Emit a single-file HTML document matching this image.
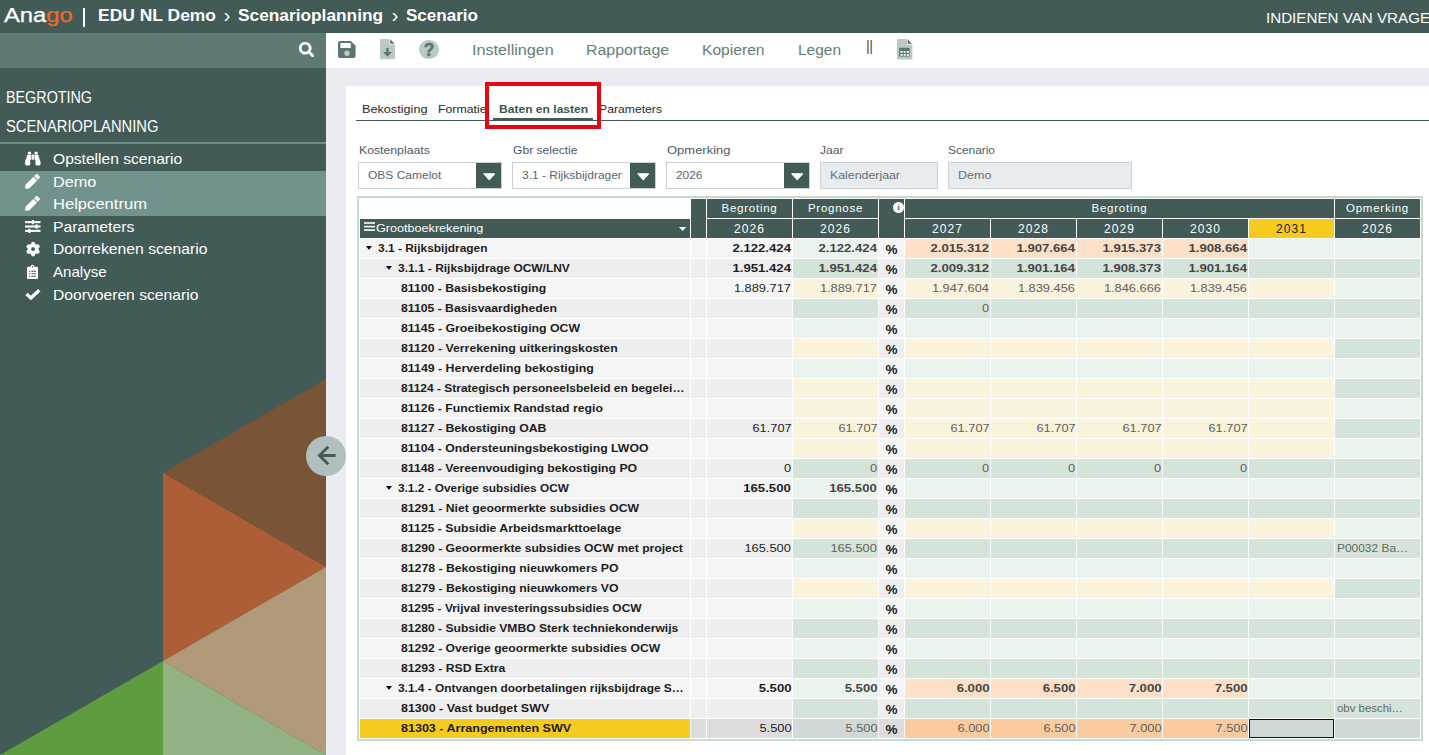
<!DOCTYPE html>
<html lang="nl"><head><meta charset="utf-8"><title>Anago - Scenario</title>
<style>
*{box-sizing:border-box;margin:0;padding:0}
html,body{width:1429px;height:755px;overflow:hidden;background:#ebecf1;font-family:"Liberation Sans",sans-serif;}
.abs{position:absolute}
#top{position:absolute;left:0;top:0;width:1429px;height:33px;background:#425b57;color:#fff;overflow:hidden}
#top span{position:absolute;white-space:nowrap;transform-origin:0 50%}
.bc{font-weight:700;font-size:17px;top:6px}
#side{position:absolute;left:0;top:33px;width:326px;height:722px;background:#425b57;overflow:hidden}
#srch{position:absolute;left:0;top:0;width:326px;height:35px;background:#5f7a74}
.sh{position:absolute;left:6px;color:#fff;font-size:16px;white-space:nowrap;transform-origin:0 50%}
.si{position:absolute;left:53px;color:#fff;font-size:15px;white-space:nowrap;transform-origin:0 50%}
.ic{position:absolute;overflow:visible}
#tool{position:absolute;left:326px;top:33px;width:1103px;height:35px;background:#fff}
.tb{position:absolute;top:41px;font-size:15px;color:#667d79;white-space:nowrap;transform-origin:0 50%}
#panel{position:absolute;left:346px;top:86px;width:1083px;height:669px;background:#fff}
.tab{position:absolute;top:102.500px;font-size:11.500px;color:#2a2a2a;white-space:nowrap;transform-origin:0 50%}
.fl{position:absolute;top:144px;font-size:11px;color:#4f5a66;white-space:nowrap;transform-origin:0 50%}
.dd{position:absolute;top:162px;height:27px;width:144px;border:1px solid #c9d0d7;background:#fff;font-size:11px;color:#5a6570;padding:5.500px 0 0 9px;white-space:nowrap;overflow:hidden}
.dd i{position:absolute;right:0;top:0;width:25px;height:25px;background:#425b57}
.dd i svg{position:absolute;left:6.5px;top:10px}
.dis{background:#e9ecef;color:#666f78}
.c{position:absolute;font-size:11px;white-space:nowrap;overflow:hidden;line-height:19.600px;color:#1d1d1d}
.lt{display:inline-block;transform-origin:0 50%}
.h{position:absolute;background:#425b57;color:#fff;font-size:11.500px;text-align:center;white-space:nowrap;letter-spacing:.75px;overflow:hidden}
.hy{font-size:12px;letter-spacing:1.100px;padding-top:3px}
.lab{font-weight:700}
.num{text-align:right;padding-right:.8px}
.num span{display:inline-block;transform-origin:100% 50%;transform:scaleX(1.165)}
.b{font-weight:700}
.b span{transform:scaleX(1.195)}
.g{color:#606060}
.b.g{color:#454545}
.pct{font-weight:700;text-align:center;font-size:13.500px;padding-right:0;line-height:21px}
.opm{color:#666;padding-left:1.500px;font-size:11px}
.ar{position:absolute;top:7px;border:3.4px solid transparent;border-top:4px solid #111;border-bottom:0}
</style></head><body>
<!-- top bar -->
<div id="top">
 <span style="left:4px;top:3.500px;font-size:20px;transform:scaleX(1.19);transform-origin:0 0;-webkit-text-stroke:.25px #fff">Ana<span style="position:static;color:#f26a21;-webkit-text-stroke:.25px #f26a21">go</span></span>
 <span style="left:82.500px;top:7.500px;width:2.500px;height:19.500px;background:#fff"></span>
 <span class="bc" style="left:98px;transform:scaleX(1.027)">EDU NL Demo</span>
 <span style="left:223.500px;top:1px;font-size:21px;line-height:28px">›</span>
 <span class="bc" style="left:238px;transform:scaleX(1.017)">Scenarioplanning</span>
 <span style="left:391.500px;top:1px;font-size:21px;line-height:28px">›</span>
 <span class="bc" style="left:406px;transform:scaleX(1.003)">Scenario</span>
 <span style="left:1266px;top:9px;font-size:15px;transform:scaleX(1.011)">INDIENEN VAN VRAGEN</span>
</div>
<!-- sidebar -->
<div id="side">
 <div id="srch"><svg class="abs" style="left:298.800px;top:8.700px" width="15.200" height="15.200" viewBox="0 0 512 512"><path fill="#fff" stroke="#fff" stroke-width="14" d="M505 442.700L405.300 343c-4.500-4.500-10.600-7-17-7H372c27.600-35.300 44-79.700 44-128C416 93.100 322.900 0 208 0S0 93.100 0 208s93.100 208 208 208c48.300 0 92.700-16.400 128-44v16.300c0 6.400 2.500 12.500 7 17l99.700 99.700c9.400 9.400 24.600 9.400 33.900 0l28.300-28.300c9.400-9.400 9.400-24.600.1-34zM208 336c-70.700 0-128-57.200-128-128 0-70.700 57.200-128 128-128 70.700 0 128 57.200 128 128 0 70.700-57.200 128-128 128z"/></svg></div>
 <svg class="abs" style="left:0;top:0" width="326" height="722" viewBox="0 33 326 722">
  <polygon points="163,473 326,379 326,567" fill="#795436"/>
  <polygon points="163,473 326,567 163,661" fill="#ad5e36"/>
  <polygon points="163,661 326,567 326,755" fill="#b19a79"/>
  <polygon points="163,661 326,755 163,755" fill="#93b283"/>
  <polygon points="163,661 163,755 0,755" fill="#5f9c3f"/>
 </svg>
 <div class="sh" style="top:56px;transform:scaleX(0.896)">BEGROTING</div>
 <div class="sh" style="top:85px;transform:scaleX(0.922)">SCENARIOPLANNING</div>
 <div class="abs" style="left:0;top:109px;width:326px;height:2px;background:#6f8e89"></div>
 <div class="abs" style="left:0;top:138px;width:326px;height:45px;background:#72928d"></div>
 <div class="si" style="top:117px;transform:scaleX(1.040)">Opstellen scenario</div>
 <div class="si" style="top:140px;transform:scaleX(1.085)">Demo</div>
 <div class="si" style="top:162px;transform:scaleX(1.105)">Helpcentrum</div>
 <div class="si" style="top:185px;transform:scaleX(1.049)">Parameters</div>
 <div class="si" style="top:207px;transform:scaleX(1.047)">Doorrekenen scenario</div>
 <div class="si" style="top:230px;transform:scaleX(1.006)">Analyse</div>
 <div class="si" style="top:253px;transform:scaleX(1.044)">Doorvoeren scenario</div>
 <!-- binoculars -->
 <svg class="ic" style="left:25px;top:119px" width="15.6" height="13.2" viewBox="0 32 512 448"><path fill="#fff" stroke="#fff" stroke-width="14" d="M416 48c0-8.840-7.160-16-16-16h-64c-8.840 0-16 7.160-16 16v48h96V48zM63.910 159.990C61.400 253.840 3.460 274.220 0 404v44c0 17.670 14.330 32 32 32h96c17.670 0 32-14.330 32-32V288h32V128H95.840c-17.630 0-31.450 14.370-31.930 31.990zm384.180 0c-.48-17.620-14.300-31.990-31.930-31.990H320v160h32v160c0 17.670 14.330 32 32 32h96c17.670 0 32-14.330 32-32v-44c-3.460-129.780-61.400-150.160-63.910-244.010zM176 32h-64c-8.840 0-16 7.160-16 16v48h96V48c0-8.840-7.160-16-16-16zm48 256h64V128h-64v160z"/></svg>
 <!-- pens -->
 <svg class="ic" style="left:25px;top:141px" width="15" height="14.800" viewBox="0 0 512 512"><path fill="#fff" d="M290.740 93.240l128.020 128.020-277.990 277.990-114.140 12.600C11.350 513.540-1.560 500.620.140 485.340l12.700-114.220 277.900-277.880zm207.200-19.060l-60.110-60.110c-18.750-18.750-49.160-18.750-67.910 0l-56.550 56.550 128.020 128.020 56.550-56.550c18.750-18.760 18.750-49.160 0-67.910z"/></svg>
 <svg class="ic" style="left:25px;top:163px" width="15" height="14.800" viewBox="0 0 512 512"><path fill="#fff" d="M290.740 93.240l128.020 128.020-277.990 277.990-114.140 12.600C11.350 513.540-1.560 500.620.140 485.340l12.700-114.220 277.900-277.880zm207.200-19.060l-60.110-60.110c-18.750-18.750-49.160-18.750-67.910 0l-56.550 56.550 128.020 128.020 56.550-56.550c18.750-18.760 18.750-49.160 0-67.910z"/></svg>
 <!-- sliders -->
 <svg class="ic" style="left:25px;top:187px" width="15.500" height="13" viewBox="0 0 15.500 13"><g fill="#fff"><rect x="0" y="1.100" width="15.500" height="2.100"/><rect x="0" y="5.450" width="15.500" height="2.100"/><rect x="0" y="9.800" width="15.500" height="2.100"/><rect x="7" y="0" width="2" height="4.300" rx=".5"/><rect x="10.600" y="4.350" width="2" height="4.300" rx=".5"/><rect x="3.400" y="8.700" width="2" height="4.300" rx=".5"/></g></svg>
 <!-- cog -->
 <svg class="ic" style="left:25.700px;top:209px" width="14.200" height="14.200" viewBox="-7.300 -7.300 14.600 14.600"><path fill="#fff" fill-rule="evenodd" stroke="#fff" stroke-width="1" stroke-linejoin="round" d="M-1.870,-4.960 L-1.100,-6.910 L1.100,-6.910 L1.870,-4.960 L3.360,-4.100 L5.440,-4.410 L6.540,-2.510 L5.230,-0.860 L5.230,0.860 L6.540,2.510 L5.440,4.410 L3.360,4.100 L1.870,4.960 L1.100,6.910 L-1.100,6.910 L-1.870,4.960 L-3.360,4.100 L-5.440,4.410 L-6.540,2.510 L-5.230,0.860 L-5.230,-0.860 L-6.540,-2.510 L-5.440,-4.410 L-3.360,-4.100Z M2.500,0 A2.500,2.500 0 1,0 -2.500,0 A2.500,2.500 0 1,0 2.500,0Z"/></svg>
 <!-- clipboard list -->
 <svg class="ic" style="left:27.200px;top:232px" width="11" height="14" viewBox="0 0 11 14"><path fill="#fff" fill-rule="evenodd" d="M1.300,1.700 H3.600 A1.900,1.900 0 0 1 7.400,1.700 H9.700 A1.300,1.300 0 0 1 11,3 V12.700 A1.300,1.300 0 0 1 9.700,14 H1.300 A1.300,1.300 0 0 1 0,12.700 V3 A1.300,1.300 0 0 1 1.300,1.700Z M5.500,1.100 A.7,.7 0 1 0 5.500,2.500 A.7,.7 0 1 0 5.500,1.100Z M2,5.700 h1.300 v1.100 h-1.300Z M4.300,5.800 h4.700 v.9 h-4.700Z M2,8.200 h1.300 v1.100 h-1.300Z M4.300,8.300 h4.700 v.9 h-4.700Z M2,10.700 h1.300 v1.100 h-1.300Z M4.300,10.800 h4.700 v.9 h-4.700Z"/></svg>
 <!-- check -->
 <svg class="ic" style="left:25px;top:256px" width="16" height="11" viewBox="0 0 16 11"><path fill="none" stroke="#fff" stroke-width="3.400" d="M1.500,5 L5.900,9 L14.300,1.200"/></svg>
</div>
<!-- toolbar -->
<div id="tool"></div>
<!-- save -->
<svg class="ic" style="left:338.400px;top:41px" width="17.600" height="17" viewBox="0 0 17.600 17"><path fill="#5a7672" fill-rule="evenodd" d="M2,0 H12.800 L17.600,4.800 V15 A2,2 0 0 1 15.600,17 H2 A2,2 0 0 1 0,15 V2 A2,2 0 0 1 2,0Z M2.400,1.900 V6.900 H12.800 V1.900Z"/><circle cx="9" cy="12.200" r="2.700" fill="#bcc8c5"/></svg>
<!-- file download -->
<svg class="ic" style="left:380.200px;top:39.200px" width="15" height="20.200" viewBox="0 0 15 20.200"><path fill="#bcc8c5" d="M1.200,0 H9.600 V5.400 H15 V19 A1.200,1.200 0 0 1 13.800,20.200 H1.200 A1.200,1.200 0 0 1 0,19 V1.200 A1.200,1.200 0 0 1 1.200,0Z"/><path fill="#5a7672" d="M10.200,0.300 L14.700,4.800 H10.200Z M6.300,9.100 H8.600 V12.900 H12 L7.450,17.800 L2.900,12.900 H6.300Z"/></svg>
<!-- help -->
<div class="abs" style="left:419.200px;top:39.500px;width:19.800px;height:19.800px;border-radius:50%;background:#bcc8c5;color:#5a7672;font-weight:700;font-size:17.500px;line-height:20.500px;text-align:center;-webkit-text-stroke:.4px #5a7672">?</div>
<span class="tb" style="left:471.500px;transform:scaleX(1.078)">Instellingen</span>
<span class="tb" style="left:586.300px;transform:scaleX(1.060)">Rapportage</span>
<span class="tb" style="left:702.200px;transform:scaleX(1.041)">Kopieren</span>
<span class="tb" style="left:797.700px;transform:scaleX(1.031)">Legen</span>
<span class="abs" style="left:866px;top:38px;font-size:14.500px;color:#3f5854;letter-spacing:-.4px;white-space:nowrap">||</span>
<!-- calc file -->
<svg class="ic" style="left:897.200px;top:39.200px" width="15.400" height="20.500" viewBox="0 0 15.400 20.500"><path fill="#bcc8c5" d="M1.300,0 H10 V5.400 H15.400 V19.200 A1.300,1.300 0 0 1 14.100,20.500 H1.300 A1.300,1.300 0 0 1 0,19.200 V1.300 A1.300,1.300 0 0 1 1.300,0Z"/><path fill="#5a7672" d="M10.600,0.300 L15.100,4.800 H10.600Z M2.100,8.800 H12.800 V17.600 H2.100Z"/><path fill="#fff" d="M3.500,11.900 V13.800 H5.700 V11.900Z M6.700,11.900 V13.800 H8.800 V11.900Z M9.800,11.900 V13.800 H12.100 V11.900Z M3.500,15 V16.800 H5.700 V15Z M6.700,15 V16.800 H8.800 V15Z M9.800,15 V16.800 H12.100 V15Z"/></svg>
<!-- panel -->
<div id="panel"></div>
<span class="tab" style="left:362px;transform:scaleX(1.101)">Bekostiging</span>
<span class="tab" style="left:438.400px;transform:scaleX(1.069)">Formatie</span>
<span class="tab" style="left:498.800px;font-weight:700;color:#3d5551;transform:scaleX(1.049)">Baten en lasten</span>
<span class="tab" style="left:599.400px;transform:scaleX(1.060)">Parameters</span>
<div class="abs" style="left:356px;top:120px;width:1073px;height:1px;background:#425b57"></div>
<div class="abs" style="left:493px;top:118px;width:100px;height:3px;background:#425b57"></div>
<div class="abs" style="left:485px;top:82px;width:116px;height:47px;border:4px solid #e30613"></div>
<span class="fl" style="left:359px;transform:scaleX(1.113)">Kostenplaats</span>
<span class="fl" style="left:513px;transform:scaleX(1.099)">Gbr selectie</span>
<span class="fl" style="left:667px;transform:scaleX(1.180)">Opmerking</span>
<span class="fl" style="left:820px;transform:scaleX(1.098)">Jaar</span>
<span class="fl" style="left:948px;transform:scaleX(1.082)">Scenario</span>
<div class="dd" style="left:358px;"><span class="lt" style="transform:scaleX(1.090)">OBS Camelot</span><i><svg width="12.500" height="7.500" viewBox="0 0 12.500 7.500"><path fill="#fff" stroke="#fff" stroke-width="1.200" stroke-linejoin="round" d="M1,.8 H11.500 L6.250,6.700Z"/></svg></i></div>
<div class="dd" style="left:512px"><span style="display:inline-block;width:100px;overflow:hidden;vertical-align:top"><span class="lt" style="transform:scaleX(1.089)">3.1 - Rijksbijdragen</span></span><i><svg width="12.500" height="7.500" viewBox="0 0 12.500 7.500"><path fill="#fff" stroke="#fff" stroke-width="1.200" stroke-linejoin="round" d="M1,.8 H11.500 L6.250,6.700Z"/></svg></i></div>
<div class="dd" style="left:666px;"><span class="lt" style="transform:scaleX(1.082)">2026</span><i><svg width="12.500" height="7.500" viewBox="0 0 12.500 7.500"><path fill="#fff" stroke="#fff" stroke-width="1.200" stroke-linejoin="round" d="M1,.8 H11.500 L6.250,6.700Z"/></svg></i></div>
<div class="dd dis" style="left:820px;width:118px;"><span class="lt" style="transform:scaleX(1.122)">Kalenderjaar</span></div>
<div class="dd dis" style="left:948px;width:184px;"><span class="lt" style="transform:scaleX(1.142)">Demo</span></div>
<!-- table -->
<div class="abs" style="left:357px;top:196px;width:1066px;height:545px;border:2px solid #c6dccc;background:#fff"></div>
<div class="h" style="left:360px;top:219px;width:330px;height:19px;text-align:left;padding:3px 0 0 16px;letter-spacing:0"><span class="lt" style="transform:scaleX(1.097)">Grootboekrekening</span></div>
<svg class="ic" style="left:364px;top:222px" width="11" height="9" viewBox="0 0 11 9"><g fill="#fff"><rect y=".2" width="11" height="1.600"/><rect y="3.800" width="11" height="1.600"/><rect y="7.300" width="11" height="1.600"/></g></svg>
<svg class="ic" style="left:679px;top:226.800px" width="7.200" height="4" viewBox="0 0 7.200 4"><path fill="#fff" d="M0,0 H7.200 L3.600,4Z"/></svg>
<div class="h" style="left:691px;top:199px;width:15px;height:39px"></div>
<div class="h" style="left:707px;top:199px;width:85px;height:19px;padding-top:2.500px">Begroting</div>
<div class="h" style="left:793px;top:199px;width:85px;height:19px;padding-top:2.500px">Prognose</div>
<div class="h hy" style="left:707px;top:219px;width:85px;height:19px">2026</div>
<div class="h hy" style="left:793px;top:219px;width:85px;height:19px">2026</div>
<div class="h" style="left:879px;top:199px;width:25px;height:39px"><span class="abs" style="left:14.200px;top:3.300px;width:11px;height:11px;border-radius:50%;background:#fff;color:#425b57;font-family:'Liberation Serif',serif;font-weight:700;font-size:8px;line-height:12.500px;letter-spacing:0;text-align:center">i</span></div>
<div class="h" style="left:905px;top:199px;width:429px;height:19px;padding-top:2.500px">Begroting</div>
<div class="h" style="left:1335px;top:199px;width:85px;height:19px;padding-top:2.500px">Opmerking</div>
<div class="h hy" style="left:905px;top:219px;width:85px;height:19px">2027</div>
<div class="h hy" style="left:991px;top:219px;width:85px;height:19px">2028</div>
<div class="h hy" style="left:1077px;top:219px;width:85px;height:19px">2029</div>
<div class="h hy" style="left:1163px;top:219px;width:85px;height:19px">2030</div>
<div class="h hy" style="left:1249px;top:219px;width:85px;height:19px;background:#f7ca1e;color:#222">2031</div>
<div class="h hy" style="left:1335px;top:219px;width:85px;height:19px">2026</div>
<div class="c lab" style="left:360px;top:239px;width:330px;height:19px;background:#f5f5f5;padding-left:18px;"><span class="ar" style="left:5.5px"></span><span class="lt" style="transform:scaleX(1.086)">3.1 - Rijksbijdragen</span></div>
<div class="c " style="left:691px;top:239px;width:15px;height:19px;background:#f5f5f5;"></div>
<div class="c num b" style="left:707px;top:239px;width:85px;height:19px;background:#f5f5f5;"><span>2.122.424</span></div>
<div class="c num g b" style="left:793px;top:239px;width:85px;height:19px;background:#eaf3ee;"><span>2.122.424</span></div>
<div class="c pct" style="left:879px;top:239px;width:25px;height:19px;background:#f5f5f5;">%</div>
<div class="c num g b" style="left:905px;top:239px;width:85px;height:19px;background:#fde0c8;"><span>2.015.312</span></div>
<div class="c num g b" style="left:991px;top:239px;width:85px;height:19px;background:#fde0c8;"><span>1.907.664</span></div>
<div class="c num g b" style="left:1077px;top:239px;width:85px;height:19px;background:#fde0c8;"><span>1.915.373</span></div>
<div class="c num g b" style="left:1163px;top:239px;width:85px;height:19px;background:#fde0c8;"><span>1.908.664</span></div>
<div class="c " style="left:1249px;top:239px;width:85px;height:19px;background:#eaf3ee;"></div>
<div class="c opm" style="left:1335px;top:239px;width:85px;height:19px;background:#eaf3ee;"></div>
<div class="c lab" style="left:360px;top:259px;width:330px;height:19px;background:#eeeeee;padding-left:38px;"><span class="ar" style="left:25.5px"></span><span class="lt" style="transform:scaleX(1.085)">3.1.1 - Rijksbijdrage OCW/LNV</span></div>
<div class="c " style="left:691px;top:259px;width:15px;height:19px;background:#eeeeee;"></div>
<div class="c num b" style="left:707px;top:259px;width:85px;height:19px;background:#eeeeee;"><span>1.951.424</span></div>
<div class="c num g b" style="left:793px;top:259px;width:85px;height:19px;background:#d4e4d9;"><span>1.951.424</span></div>
<div class="c pct" style="left:879px;top:259px;width:25px;height:19px;background:#eeeeee;">%</div>
<div class="c num g b" style="left:905px;top:259px;width:85px;height:19px;background:#d4e4d9;"><span>2.009.312</span></div>
<div class="c num g b" style="left:991px;top:259px;width:85px;height:19px;background:#d4e4d9;"><span>1.901.164</span></div>
<div class="c num g b" style="left:1077px;top:259px;width:85px;height:19px;background:#d4e4d9;"><span>1.908.373</span></div>
<div class="c num g b" style="left:1163px;top:259px;width:85px;height:19px;background:#d4e4d9;"><span>1.901.164</span></div>
<div class="c " style="left:1249px;top:259px;width:85px;height:19px;background:#d4e4d9;"></div>
<div class="c opm" style="left:1335px;top:259px;width:85px;height:19px;background:#d4e4d9;"></div>
<div class="c lab" style="left:360px;top:279px;width:330px;height:19px;background:#f5f5f5;padding-left:41px;"><span class="lt" style="transform:scaleX(1.110)">81100 - Basisbekostiging</span></div>
<div class="c " style="left:691px;top:279px;width:15px;height:19px;background:#f5f5f5;"></div>
<div class="c num" style="left:707px;top:279px;width:85px;height:19px;background:#f5f5f5;"><span>1.889.717</span></div>
<div class="c num g" style="left:793px;top:279px;width:85px;height:19px;background:#f9f3dc;"><span>1.889.717</span></div>
<div class="c pct" style="left:879px;top:279px;width:25px;height:19px;background:#f5f5f5;">%</div>
<div class="c num g" style="left:905px;top:279px;width:85px;height:19px;background:#f9f3dc;"><span>1.947.604</span></div>
<div class="c num g" style="left:991px;top:279px;width:85px;height:19px;background:#f9f3dc;"><span>1.839.456</span></div>
<div class="c num g" style="left:1077px;top:279px;width:85px;height:19px;background:#f9f3dc;"><span>1.846.666</span></div>
<div class="c num g" style="left:1163px;top:279px;width:85px;height:19px;background:#f9f3dc;"><span>1.839.456</span></div>
<div class="c " style="left:1249px;top:279px;width:85px;height:19px;background:#f9f3dc;"></div>
<div class="c opm" style="left:1335px;top:279px;width:85px;height:19px;background:#eaf3ee;"></div>
<div class="c lab" style="left:360px;top:299px;width:330px;height:19px;background:#eeeeee;padding-left:41px;"><span class="lt" style="transform:scaleX(1.109)">81105 - Basisvaardigheden</span></div>
<div class="c " style="left:691px;top:299px;width:15px;height:19px;background:#eeeeee;"></div>
<div class="c num" style="left:707px;top:299px;width:85px;height:19px;background:#eeeeee;"></div>
<div class="c num g" style="left:793px;top:299px;width:85px;height:19px;background:#d4e4d9;"></div>
<div class="c pct" style="left:879px;top:299px;width:25px;height:19px;background:#eeeeee;">%</div>
<div class="c num g" style="left:905px;top:299px;width:85px;height:19px;background:#d4e4d9;"><span>0</span></div>
<div class="c num g" style="left:991px;top:299px;width:85px;height:19px;background:#d4e4d9;"></div>
<div class="c num g" style="left:1077px;top:299px;width:85px;height:19px;background:#d4e4d9;"></div>
<div class="c num g" style="left:1163px;top:299px;width:85px;height:19px;background:#d4e4d9;"></div>
<div class="c " style="left:1249px;top:299px;width:85px;height:19px;background:#d4e4d9;"></div>
<div class="c opm" style="left:1335px;top:299px;width:85px;height:19px;background:#d4e4d9;"></div>
<div class="c lab" style="left:360px;top:319px;width:330px;height:19px;background:#f5f5f5;padding-left:41px;"><span class="lt" style="transform:scaleX(1.118)">81145 - Groeibekostiging OCW</span></div>
<div class="c " style="left:691px;top:319px;width:15px;height:19px;background:#f5f5f5;"></div>
<div class="c num" style="left:707px;top:319px;width:85px;height:19px;background:#f5f5f5;"></div>
<div class="c num g" style="left:793px;top:319px;width:85px;height:19px;background:#eaf3ee;"></div>
<div class="c pct" style="left:879px;top:319px;width:25px;height:19px;background:#f5f5f5;">%</div>
<div class="c num g" style="left:905px;top:319px;width:85px;height:19px;background:#eaf3ee;"></div>
<div class="c num g" style="left:991px;top:319px;width:85px;height:19px;background:#eaf3ee;"></div>
<div class="c num g" style="left:1077px;top:319px;width:85px;height:19px;background:#eaf3ee;"></div>
<div class="c num g" style="left:1163px;top:319px;width:85px;height:19px;background:#eaf3ee;"></div>
<div class="c " style="left:1249px;top:319px;width:85px;height:19px;background:#eaf3ee;"></div>
<div class="c opm" style="left:1335px;top:319px;width:85px;height:19px;background:#eaf3ee;"></div>
<div class="c lab" style="left:360px;top:339px;width:330px;height:19px;background:#eeeeee;padding-left:41px;"><span class="lt" style="transform:scaleX(1.118)">81120 - Verrekening uitkeringskosten</span></div>
<div class="c " style="left:691px;top:339px;width:15px;height:19px;background:#eeeeee;"></div>
<div class="c num" style="left:707px;top:339px;width:85px;height:19px;background:#eeeeee;"></div>
<div class="c num g" style="left:793px;top:339px;width:85px;height:19px;background:#f9f3dc;"></div>
<div class="c pct" style="left:879px;top:339px;width:25px;height:19px;background:#eeeeee;">%</div>
<div class="c num g" style="left:905px;top:339px;width:85px;height:19px;background:#f9f3dc;"></div>
<div class="c num g" style="left:991px;top:339px;width:85px;height:19px;background:#f9f3dc;"></div>
<div class="c num g" style="left:1077px;top:339px;width:85px;height:19px;background:#f9f3dc;"></div>
<div class="c num g" style="left:1163px;top:339px;width:85px;height:19px;background:#f9f3dc;"></div>
<div class="c " style="left:1249px;top:339px;width:85px;height:19px;background:#f9f3dc;"></div>
<div class="c opm" style="left:1335px;top:339px;width:85px;height:19px;background:#d4e4d9;"></div>
<div class="c lab" style="left:360px;top:359px;width:330px;height:19px;background:#f5f5f5;padding-left:41px;"><span class="lt" style="transform:scaleX(1.122)">81149 - Herverdeling bekostiging</span></div>
<div class="c " style="left:691px;top:359px;width:15px;height:19px;background:#f5f5f5;"></div>
<div class="c num" style="left:707px;top:359px;width:85px;height:19px;background:#f5f5f5;"></div>
<div class="c num g" style="left:793px;top:359px;width:85px;height:19px;background:#eaf3ee;"></div>
<div class="c pct" style="left:879px;top:359px;width:25px;height:19px;background:#f5f5f5;">%</div>
<div class="c num g" style="left:905px;top:359px;width:85px;height:19px;background:#eaf3ee;"></div>
<div class="c num g" style="left:991px;top:359px;width:85px;height:19px;background:#eaf3ee;"></div>
<div class="c num g" style="left:1077px;top:359px;width:85px;height:19px;background:#eaf3ee;"></div>
<div class="c num g" style="left:1163px;top:359px;width:85px;height:19px;background:#eaf3ee;"></div>
<div class="c " style="left:1249px;top:359px;width:85px;height:19px;background:#eaf3ee;"></div>
<div class="c opm" style="left:1335px;top:359px;width:85px;height:19px;background:#eaf3ee;"></div>
<div class="c lab" style="left:360px;top:379px;width:330px;height:19px;background:#eeeeee;padding-left:41px;"><span class="lt" style="transform:scaleX(1.088)">81124 - Strategisch personeelsbeleid en begelei…</span></div>
<div class="c " style="left:691px;top:379px;width:15px;height:19px;background:#eeeeee;"></div>
<div class="c num" style="left:707px;top:379px;width:85px;height:19px;background:#eeeeee;"></div>
<div class="c num g" style="left:793px;top:379px;width:85px;height:19px;background:#f9f3dc;"></div>
<div class="c pct" style="left:879px;top:379px;width:25px;height:19px;background:#eeeeee;">%</div>
<div class="c num g" style="left:905px;top:379px;width:85px;height:19px;background:#f9f3dc;"></div>
<div class="c num g" style="left:991px;top:379px;width:85px;height:19px;background:#f9f3dc;"></div>
<div class="c num g" style="left:1077px;top:379px;width:85px;height:19px;background:#f9f3dc;"></div>
<div class="c num g" style="left:1163px;top:379px;width:85px;height:19px;background:#f9f3dc;"></div>
<div class="c " style="left:1249px;top:379px;width:85px;height:19px;background:#f9f3dc;"></div>
<div class="c opm" style="left:1335px;top:379px;width:85px;height:19px;background:#d4e4d9;"></div>
<div class="c lab" style="left:360px;top:399px;width:330px;height:19px;background:#f5f5f5;padding-left:41px;"><span class="lt" style="transform:scaleX(1.116)">81126 - Functiemix Randstad regio</span></div>
<div class="c " style="left:691px;top:399px;width:15px;height:19px;background:#f5f5f5;"></div>
<div class="c num" style="left:707px;top:399px;width:85px;height:19px;background:#f5f5f5;"></div>
<div class="c num g" style="left:793px;top:399px;width:85px;height:19px;background:#f9f3dc;"></div>
<div class="c pct" style="left:879px;top:399px;width:25px;height:19px;background:#f5f5f5;">%</div>
<div class="c num g" style="left:905px;top:399px;width:85px;height:19px;background:#f9f3dc;"></div>
<div class="c num g" style="left:991px;top:399px;width:85px;height:19px;background:#f9f3dc;"></div>
<div class="c num g" style="left:1077px;top:399px;width:85px;height:19px;background:#f9f3dc;"></div>
<div class="c num g" style="left:1163px;top:399px;width:85px;height:19px;background:#f9f3dc;"></div>
<div class="c " style="left:1249px;top:399px;width:85px;height:19px;background:#f9f3dc;"></div>
<div class="c opm" style="left:1335px;top:399px;width:85px;height:19px;background:#eaf3ee;"></div>
<div class="c lab" style="left:360px;top:419px;width:330px;height:19px;background:#eeeeee;padding-left:41px;"><span class="lt" style="transform:scaleX(1.117)">81127 - Bekostiging OAB</span></div>
<div class="c " style="left:691px;top:419px;width:15px;height:19px;background:#eeeeee;"></div>
<div class="c num" style="left:707px;top:419px;width:85px;height:19px;background:#eeeeee;"><span>61.707</span></div>
<div class="c num g" style="left:793px;top:419px;width:85px;height:19px;background:#f9f3dc;"><span>61.707</span></div>
<div class="c pct" style="left:879px;top:419px;width:25px;height:19px;background:#eeeeee;">%</div>
<div class="c num g" style="left:905px;top:419px;width:85px;height:19px;background:#f9f3dc;"><span>61.707</span></div>
<div class="c num g" style="left:991px;top:419px;width:85px;height:19px;background:#f9f3dc;"><span>61.707</span></div>
<div class="c num g" style="left:1077px;top:419px;width:85px;height:19px;background:#f9f3dc;"><span>61.707</span></div>
<div class="c num g" style="left:1163px;top:419px;width:85px;height:19px;background:#f9f3dc;"><span>61.707</span></div>
<div class="c " style="left:1249px;top:419px;width:85px;height:19px;background:#f9f3dc;"></div>
<div class="c opm" style="left:1335px;top:419px;width:85px;height:19px;background:#d4e4d9;"></div>
<div class="c lab" style="left:360px;top:439px;width:330px;height:19px;background:#f5f5f5;padding-left:41px;"><span class="lt" style="transform:scaleX(1.112)">81104 - Ondersteuningsbekostiging LWOO</span></div>
<div class="c " style="left:691px;top:439px;width:15px;height:19px;background:#f5f5f5;"></div>
<div class="c num" style="left:707px;top:439px;width:85px;height:19px;background:#f5f5f5;"></div>
<div class="c num g" style="left:793px;top:439px;width:85px;height:19px;background:#f9f3dc;"></div>
<div class="c pct" style="left:879px;top:439px;width:25px;height:19px;background:#f5f5f5;">%</div>
<div class="c num g" style="left:905px;top:439px;width:85px;height:19px;background:#f9f3dc;"></div>
<div class="c num g" style="left:991px;top:439px;width:85px;height:19px;background:#f9f3dc;"></div>
<div class="c num g" style="left:1077px;top:439px;width:85px;height:19px;background:#f9f3dc;"></div>
<div class="c num g" style="left:1163px;top:439px;width:85px;height:19px;background:#f9f3dc;"></div>
<div class="c " style="left:1249px;top:439px;width:85px;height:19px;background:#f9f3dc;"></div>
<div class="c opm" style="left:1335px;top:439px;width:85px;height:19px;background:#eaf3ee;"></div>
<div class="c lab" style="left:360px;top:459px;width:330px;height:19px;background:#eeeeee;padding-left:41px;"><span class="lt" style="transform:scaleX(1.113)">81148 - Vereenvoudiging bekostiging PO</span></div>
<div class="c " style="left:691px;top:459px;width:15px;height:19px;background:#eeeeee;"></div>
<div class="c num" style="left:707px;top:459px;width:85px;height:19px;background:#eeeeee;"><span>0</span></div>
<div class="c num g" style="left:793px;top:459px;width:85px;height:19px;background:#d4e4d9;"><span>0</span></div>
<div class="c pct" style="left:879px;top:459px;width:25px;height:19px;background:#eeeeee;">%</div>
<div class="c num g" style="left:905px;top:459px;width:85px;height:19px;background:#d4e4d9;"><span>0</span></div>
<div class="c num g" style="left:991px;top:459px;width:85px;height:19px;background:#d4e4d9;"><span>0</span></div>
<div class="c num g" style="left:1077px;top:459px;width:85px;height:19px;background:#d4e4d9;"><span>0</span></div>
<div class="c num g" style="left:1163px;top:459px;width:85px;height:19px;background:#d4e4d9;"><span>0</span></div>
<div class="c " style="left:1249px;top:459px;width:85px;height:19px;background:#d4e4d9;"></div>
<div class="c opm" style="left:1335px;top:459px;width:85px;height:19px;background:#d4e4d9;"></div>
<div class="c lab" style="left:360px;top:479px;width:330px;height:19px;background:#f5f5f5;padding-left:38px;"><span class="ar" style="left:25.5px"></span><span class="lt" style="transform:scaleX(1.075)">3.1.2 - Overige subsidies OCW</span></div>
<div class="c " style="left:691px;top:479px;width:15px;height:19px;background:#f5f5f5;"></div>
<div class="c num b" style="left:707px;top:479px;width:85px;height:19px;background:#f5f5f5;"><span>165.500</span></div>
<div class="c num g b" style="left:793px;top:479px;width:85px;height:19px;background:#eaf3ee;"><span>165.500</span></div>
<div class="c pct" style="left:879px;top:479px;width:25px;height:19px;background:#f5f5f5;">%</div>
<div class="c num g b" style="left:905px;top:479px;width:85px;height:19px;background:#eaf3ee;"></div>
<div class="c num g b" style="left:991px;top:479px;width:85px;height:19px;background:#eaf3ee;"></div>
<div class="c num g b" style="left:1077px;top:479px;width:85px;height:19px;background:#eaf3ee;"></div>
<div class="c num g b" style="left:1163px;top:479px;width:85px;height:19px;background:#eaf3ee;"></div>
<div class="c " style="left:1249px;top:479px;width:85px;height:19px;background:#eaf3ee;"></div>
<div class="c opm" style="left:1335px;top:479px;width:85px;height:19px;background:#eaf3ee;"></div>
<div class="c lab" style="left:360px;top:499px;width:330px;height:19px;background:#eeeeee;padding-left:41px;"><span class="lt" style="transform:scaleX(1.109)">81291 - Niet geoormerkte subsidies OCW</span></div>
<div class="c " style="left:691px;top:499px;width:15px;height:19px;background:#eeeeee;"></div>
<div class="c num" style="left:707px;top:499px;width:85px;height:19px;background:#eeeeee;"></div>
<div class="c num g" style="left:793px;top:499px;width:85px;height:19px;background:#d4e4d9;"></div>
<div class="c pct" style="left:879px;top:499px;width:25px;height:19px;background:#eeeeee;">%</div>
<div class="c num g" style="left:905px;top:499px;width:85px;height:19px;background:#d4e4d9;"></div>
<div class="c num g" style="left:991px;top:499px;width:85px;height:19px;background:#d4e4d9;"></div>
<div class="c num g" style="left:1077px;top:499px;width:85px;height:19px;background:#d4e4d9;"></div>
<div class="c num g" style="left:1163px;top:499px;width:85px;height:19px;background:#d4e4d9;"></div>
<div class="c " style="left:1249px;top:499px;width:85px;height:19px;background:#d4e4d9;"></div>
<div class="c opm" style="left:1335px;top:499px;width:85px;height:19px;background:#d4e4d9;"></div>
<div class="c lab" style="left:360px;top:519px;width:330px;height:19px;background:#f5f5f5;padding-left:41px;"><span class="lt" style="transform:scaleX(1.114)">81125 - Subsidie Arbeidsmarkttoelage</span></div>
<div class="c " style="left:691px;top:519px;width:15px;height:19px;background:#f5f5f5;"></div>
<div class="c num" style="left:707px;top:519px;width:85px;height:19px;background:#f5f5f5;"></div>
<div class="c num g" style="left:793px;top:519px;width:85px;height:19px;background:#f9f3dc;"></div>
<div class="c pct" style="left:879px;top:519px;width:25px;height:19px;background:#f5f5f5;">%</div>
<div class="c num g" style="left:905px;top:519px;width:85px;height:19px;background:#f9f3dc;"></div>
<div class="c num g" style="left:991px;top:519px;width:85px;height:19px;background:#f9f3dc;"></div>
<div class="c num g" style="left:1077px;top:519px;width:85px;height:19px;background:#f9f3dc;"></div>
<div class="c num g" style="left:1163px;top:519px;width:85px;height:19px;background:#f9f3dc;"></div>
<div class="c " style="left:1249px;top:519px;width:85px;height:19px;background:#f9f3dc;"></div>
<div class="c opm" style="left:1335px;top:519px;width:85px;height:19px;background:#eaf3ee;"></div>
<div class="c lab" style="left:360px;top:539px;width:330px;height:19px;background:#eeeeee;padding-left:41px;"><span class="lt" style="transform:scaleX(1.105)">81290 - Geoormerkte subsidies OCW met project</span></div>
<div class="c " style="left:691px;top:539px;width:15px;height:19px;background:#eeeeee;"></div>
<div class="c num" style="left:707px;top:539px;width:85px;height:19px;background:#eeeeee;"><span>165.500</span></div>
<div class="c num g" style="left:793px;top:539px;width:85px;height:19px;background:#d4e4d9;"><span>165.500</span></div>
<div class="c pct" style="left:879px;top:539px;width:25px;height:19px;background:#eeeeee;">%</div>
<div class="c num g" style="left:905px;top:539px;width:85px;height:19px;background:#d4e4d9;"></div>
<div class="c num g" style="left:991px;top:539px;width:85px;height:19px;background:#d4e4d9;"></div>
<div class="c num g" style="left:1077px;top:539px;width:85px;height:19px;background:#d4e4d9;"></div>
<div class="c num g" style="left:1163px;top:539px;width:85px;height:19px;background:#d4e4d9;"></div>
<div class="c " style="left:1249px;top:539px;width:85px;height:19px;background:#d4e4d9;"></div>
<div class="c opm" style="left:1335px;top:539px;width:85px;height:19px;background:#d4e4d9;"><span class="lt" style="transform:scaleX(1.085)">P00032 Ba…</span></div>
<div class="c lab" style="left:360px;top:559px;width:330px;height:19px;background:#f5f5f5;padding-left:41px;"><span class="lt" style="transform:scaleX(1.112)">81278 - Bekostiging nieuwkomers PO</span></div>
<div class="c " style="left:691px;top:559px;width:15px;height:19px;background:#f5f5f5;"></div>
<div class="c num" style="left:707px;top:559px;width:85px;height:19px;background:#f5f5f5;"></div>
<div class="c num g" style="left:793px;top:559px;width:85px;height:19px;background:#eaf3ee;"></div>
<div class="c pct" style="left:879px;top:559px;width:25px;height:19px;background:#f5f5f5;">%</div>
<div class="c num g" style="left:905px;top:559px;width:85px;height:19px;background:#eaf3ee;"></div>
<div class="c num g" style="left:991px;top:559px;width:85px;height:19px;background:#eaf3ee;"></div>
<div class="c num g" style="left:1077px;top:559px;width:85px;height:19px;background:#eaf3ee;"></div>
<div class="c num g" style="left:1163px;top:559px;width:85px;height:19px;background:#eaf3ee;"></div>
<div class="c " style="left:1249px;top:559px;width:85px;height:19px;background:#eaf3ee;"></div>
<div class="c opm" style="left:1335px;top:559px;width:85px;height:19px;background:#eaf3ee;"></div>
<div class="c lab" style="left:360px;top:579px;width:330px;height:19px;background:#eeeeee;padding-left:41px;"><span class="lt" style="transform:scaleX(1.112)">81279 - Bekostiging nieuwkomers VO</span></div>
<div class="c " style="left:691px;top:579px;width:15px;height:19px;background:#eeeeee;"></div>
<div class="c num" style="left:707px;top:579px;width:85px;height:19px;background:#eeeeee;"></div>
<div class="c num g" style="left:793px;top:579px;width:85px;height:19px;background:#f9f3dc;"></div>
<div class="c pct" style="left:879px;top:579px;width:25px;height:19px;background:#eeeeee;">%</div>
<div class="c num g" style="left:905px;top:579px;width:85px;height:19px;background:#f9f3dc;"></div>
<div class="c num g" style="left:991px;top:579px;width:85px;height:19px;background:#f9f3dc;"></div>
<div class="c num g" style="left:1077px;top:579px;width:85px;height:19px;background:#f9f3dc;"></div>
<div class="c num g" style="left:1163px;top:579px;width:85px;height:19px;background:#f9f3dc;"></div>
<div class="c " style="left:1249px;top:579px;width:85px;height:19px;background:#f9f3dc;"></div>
<div class="c opm" style="left:1335px;top:579px;width:85px;height:19px;background:#d4e4d9;"></div>
<div class="c lab" style="left:360px;top:599px;width:330px;height:19px;background:#f5f5f5;padding-left:41px;"><span class="lt" style="transform:scaleX(1.087)">81295 - Vrijval investeringssubsidies OCW</span></div>
<div class="c " style="left:691px;top:599px;width:15px;height:19px;background:#f5f5f5;"></div>
<div class="c num" style="left:707px;top:599px;width:85px;height:19px;background:#f5f5f5;"></div>
<div class="c num g" style="left:793px;top:599px;width:85px;height:19px;background:#eaf3ee;"></div>
<div class="c pct" style="left:879px;top:599px;width:25px;height:19px;background:#f5f5f5;">%</div>
<div class="c num g" style="left:905px;top:599px;width:85px;height:19px;background:#eaf3ee;"></div>
<div class="c num g" style="left:991px;top:599px;width:85px;height:19px;background:#eaf3ee;"></div>
<div class="c num g" style="left:1077px;top:599px;width:85px;height:19px;background:#eaf3ee;"></div>
<div class="c num g" style="left:1163px;top:599px;width:85px;height:19px;background:#eaf3ee;"></div>
<div class="c " style="left:1249px;top:599px;width:85px;height:19px;background:#eaf3ee;"></div>
<div class="c opm" style="left:1335px;top:599px;width:85px;height:19px;background:#eaf3ee;"></div>
<div class="c lab" style="left:360px;top:619px;width:330px;height:19px;background:#eeeeee;padding-left:41px;"><span class="lt" style="transform:scaleX(1.101)">81280 - Subsidie VMBO Sterk techniekonderwijs</span></div>
<div class="c " style="left:691px;top:619px;width:15px;height:19px;background:#eeeeee;"></div>
<div class="c num" style="left:707px;top:619px;width:85px;height:19px;background:#eeeeee;"></div>
<div class="c num g" style="left:793px;top:619px;width:85px;height:19px;background:#d4e4d9;"></div>
<div class="c pct" style="left:879px;top:619px;width:25px;height:19px;background:#eeeeee;">%</div>
<div class="c num g" style="left:905px;top:619px;width:85px;height:19px;background:#d4e4d9;"></div>
<div class="c num g" style="left:991px;top:619px;width:85px;height:19px;background:#d4e4d9;"></div>
<div class="c num g" style="left:1077px;top:619px;width:85px;height:19px;background:#d4e4d9;"></div>
<div class="c num g" style="left:1163px;top:619px;width:85px;height:19px;background:#d4e4d9;"></div>
<div class="c " style="left:1249px;top:619px;width:85px;height:19px;background:#d4e4d9;"></div>
<div class="c opm" style="left:1335px;top:619px;width:85px;height:19px;background:#d4e4d9;"></div>
<div class="c lab" style="left:360px;top:639px;width:330px;height:19px;background:#f5f5f5;padding-left:41px;"><span class="lt" style="transform:scaleX(1.104)">81292 - Overige geoormerkte subsidies OCW</span></div>
<div class="c " style="left:691px;top:639px;width:15px;height:19px;background:#f5f5f5;"></div>
<div class="c num" style="left:707px;top:639px;width:85px;height:19px;background:#f5f5f5;"></div>
<div class="c num g" style="left:793px;top:639px;width:85px;height:19px;background:#eaf3ee;"></div>
<div class="c pct" style="left:879px;top:639px;width:25px;height:19px;background:#f5f5f5;">%</div>
<div class="c num g" style="left:905px;top:639px;width:85px;height:19px;background:#eaf3ee;"></div>
<div class="c num g" style="left:991px;top:639px;width:85px;height:19px;background:#eaf3ee;"></div>
<div class="c num g" style="left:1077px;top:639px;width:85px;height:19px;background:#eaf3ee;"></div>
<div class="c num g" style="left:1163px;top:639px;width:85px;height:19px;background:#eaf3ee;"></div>
<div class="c " style="left:1249px;top:639px;width:85px;height:19px;background:#eaf3ee;"></div>
<div class="c opm" style="left:1335px;top:639px;width:85px;height:19px;background:#eaf3ee;"></div>
<div class="c lab" style="left:360px;top:659px;width:330px;height:19px;background:#eeeeee;padding-left:41px;"><span class="lt" style="transform:scaleX(1.108)">81293 - RSD Extra</span></div>
<div class="c " style="left:691px;top:659px;width:15px;height:19px;background:#eeeeee;"></div>
<div class="c num" style="left:707px;top:659px;width:85px;height:19px;background:#eeeeee;"></div>
<div class="c num g" style="left:793px;top:659px;width:85px;height:19px;background:#d4e4d9;"></div>
<div class="c pct" style="left:879px;top:659px;width:25px;height:19px;background:#eeeeee;">%</div>
<div class="c num g" style="left:905px;top:659px;width:85px;height:19px;background:#d4e4d9;"></div>
<div class="c num g" style="left:991px;top:659px;width:85px;height:19px;background:#d4e4d9;"></div>
<div class="c num g" style="left:1077px;top:659px;width:85px;height:19px;background:#d4e4d9;"></div>
<div class="c num g" style="left:1163px;top:659px;width:85px;height:19px;background:#d4e4d9;"></div>
<div class="c " style="left:1249px;top:659px;width:85px;height:19px;background:#d4e4d9;"></div>
<div class="c opm" style="left:1335px;top:659px;width:85px;height:19px;background:#d4e4d9;"></div>
<div class="c lab" style="left:360px;top:679px;width:330px;height:19px;background:#f5f5f5;padding-left:38px;"><span class="ar" style="left:25.5px"></span><span class="lt" style="transform:scaleX(1.082)">3.1.4 - Ontvangen doorbetalingen rijksbijdrage S…</span></div>
<div class="c " style="left:691px;top:679px;width:15px;height:19px;background:#f5f5f5;"></div>
<div class="c num b" style="left:707px;top:679px;width:85px;height:19px;background:#f5f5f5;"><span>5.500</span></div>
<div class="c num g b" style="left:793px;top:679px;width:85px;height:19px;background:#eaf3ee;"><span>5.500</span></div>
<div class="c pct" style="left:879px;top:679px;width:25px;height:19px;background:#f5f5f5;">%</div>
<div class="c num g b" style="left:905px;top:679px;width:85px;height:19px;background:#fde0c8;"><span>6.000</span></div>
<div class="c num g b" style="left:991px;top:679px;width:85px;height:19px;background:#fde0c8;"><span>6.500</span></div>
<div class="c num g b" style="left:1077px;top:679px;width:85px;height:19px;background:#fde0c8;"><span>7.000</span></div>
<div class="c num g b" style="left:1163px;top:679px;width:85px;height:19px;background:#fde0c8;"><span>7.500</span></div>
<div class="c " style="left:1249px;top:679px;width:85px;height:19px;background:#eaf3ee;"></div>
<div class="c opm" style="left:1335px;top:679px;width:85px;height:19px;background:#eaf3ee;"></div>
<div class="c lab" style="left:360px;top:699px;width:330px;height:19px;background:#eeeeee;padding-left:41px;"><span class="lt" style="transform:scaleX(1.133)">81300 - Vast budget SWV</span></div>
<div class="c " style="left:691px;top:699px;width:15px;height:19px;background:#eeeeee;"></div>
<div class="c num" style="left:707px;top:699px;width:85px;height:19px;background:#eeeeee;"></div>
<div class="c num g" style="left:793px;top:699px;width:85px;height:19px;background:#d4e4d9;"></div>
<div class="c pct" style="left:879px;top:699px;width:25px;height:19px;background:#eeeeee;">%</div>
<div class="c num g" style="left:905px;top:699px;width:85px;height:19px;background:#d4e4d9;"></div>
<div class="c num g" style="left:991px;top:699px;width:85px;height:19px;background:#d4e4d9;"></div>
<div class="c num g" style="left:1077px;top:699px;width:85px;height:19px;background:#d4e4d9;"></div>
<div class="c num g" style="left:1163px;top:699px;width:85px;height:19px;background:#d4e4d9;"></div>
<div class="c " style="left:1249px;top:699px;width:85px;height:19px;background:#d4e4d9;"></div>
<div class="c opm" style="left:1335px;top:699px;width:85px;height:19px;background:#d4e4d9;"><span class="lt" style="transform:scaleX(1.038)">obv beschi…</span></div>
<div class="c lab" style="left:360px;top:719px;width:330px;height:19px;background:#f7ca1e;padding-left:41px;"><span class="lt" style="transform:scaleX(1.139)">81303 - Arrangementen SWV</span></div>
<div class="c " style="left:691px;top:719px;width:15px;height:19px;background:#dcdcdc;"></div>
<div class="c num" style="left:707px;top:719px;width:85px;height:19px;background:#dcdcdc;"><span>5.500</span></div>
<div class="c num g" style="left:793px;top:719px;width:85px;height:19px;background:#d0d9d6;"><span>5.500</span></div>
<div class="c pct" style="left:879px;top:719px;width:25px;height:19px;background:#dcdcdc;">%</div>
<div class="c num g" style="left:905px;top:719px;width:85px;height:19px;background:#facb9e;"><span>6.000</span></div>
<div class="c num g" style="left:991px;top:719px;width:85px;height:19px;background:#facb9e;"><span>6.500</span></div>
<div class="c num g" style="left:1077px;top:719px;width:85px;height:19px;background:#facb9e;"><span>7.000</span></div>
<div class="c num g" style="left:1163px;top:719px;width:85px;height:19px;background:#facb9e;"><span>7.500</span></div>
<div class="c " style="left:1249px;top:719px;width:85px;height:19px;background:#d0d9d6;box-shadow:inset 0 0 0 1px #111;"></div>
<div class="c opm" style="left:1335px;top:719px;width:85px;height:19px;background:#d0d9d6;"></div>
<!-- collapse button -->
<div class="abs" style="left:306px;top:436px;width:40px;height:40px;border-radius:50%;background:#b2bfbf"></div>
<svg class="ic" style="left:306px;top:436px" width="40" height="40" viewBox="306 436 40 40"><path fill="none" stroke="#425b57" stroke-width="2.800" d="M335.600,455.500 H319.500 M328.300,446.700 L319.400,455.500 L328.300,464.300"/></svg>
</body></html>
